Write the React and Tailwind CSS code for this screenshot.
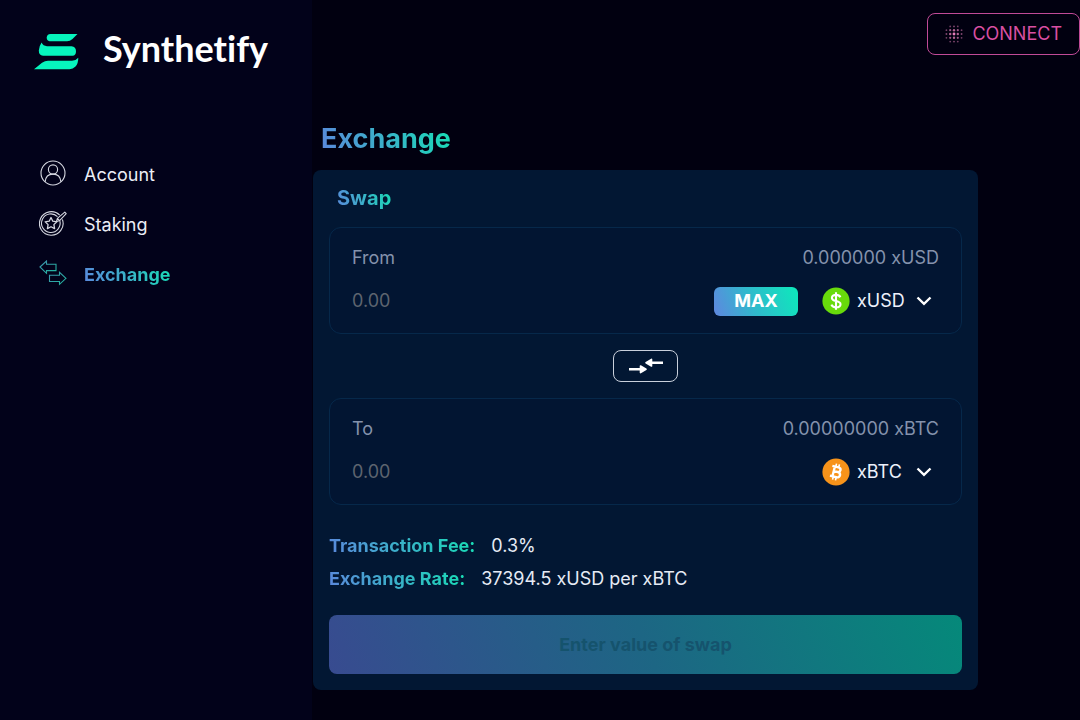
import React from "react";

const gradientText =
  "bg-linear-[68deg,#5c86dd,#16dfb4] bg-clip-text text-transparent";

function Logo() {
  return (
    <a href="#home" className="flex items-end gap-6 px-[34px] text-white">
      <svg viewBox="0 0 45 36" className="h-9 w-[45px] shrink-0" fill="#07f5bd" aria-hidden="true">
        <path d="M16.5 0H43.5L38.5 5Q36 7.2 33 7.2H15.5Q12.7 6.8 12.7 3.8Q12.8 .3 16.5 0Z" />
        <path d="M7.6 8.6Q9 12 13 12.3H37.5Q42 12.7 42 17.3Q42 21.7 38.5 21.8H9Q4.8 21.3 4.8 16.5Q5.2 12 7.6 8.6Z" />
        <path d="M14 26.7H38Q42 26.6 44.3 23.7Q44.3 29.5 41.5 32.6Q39 35.2 35.5 35.2H0L8 28.8Q11 26.7 14 26.7Z" />
      </svg>
      <span className="font-['Lato',sans-serif] text-4xl leading-[44px] font-bold [font-variant-ligatures:none]">Synthetify</span>
    </a>
  );
}

function AccountIcon() {
  return (
    <svg viewBox="0 0 26 26" className="size-[26px]" fill="none" stroke="#d5d7e0" strokeWidth="1.1" aria-hidden="true">
      <circle cx="13" cy="13" r="12" />
      <circle cx="13" cy="9.5" r="4.6" />
      <path d="M5.2 21.8C5.5 17.2 8.2 14.1 13 14.1C17.8 14.1 20.5 17.2 20.8 21.8" />
    </svg>
  );
}

function StakingIcon() {
  return (
    <svg viewBox="0 0 28 26" className="h-[26px] w-7" fill="none" stroke="#d5d7e0" strokeWidth="1.1" strokeLinejoin="round" aria-hidden="true">
      <path d="M20.7 5.2A11.8 11.8 0 1 0 23.4 9.5" />
      <path d="M18.5 6.7A9.3 9.3 0 1 0 20.8 10.7" />
      <path d="M12 7.5L13.8 11.2L17.8 11.8L14.9 14.6L15.6 18.6L12 16.7L8.4 18.6L9.1 14.6L6.2 11.8L10.2 11.2Z" strokeWidth="1.3" />
      <path d="M17.3 11.8L18.4 8.4L25.8 2.2L27.2 3.6L20.6 10.6ZM18.4 8.4L20.6 10.6" />
    </svg>
  );
}

function ExchangeIcon() {
  return (
    <svg viewBox="0 0 28 26" className="h-[26px] w-7" fill="none" stroke="url(#arrows)" strokeWidth="1.1" aria-hidden="true">
      <defs>
        <linearGradient id="arrows" x1="0" y1="0" x2="1" y2="1">
          <stop offset="0" stopColor="#3f93ad" />
          <stop offset="1" stopColor="#1fb79d" />
        </linearGradient>
      </defs>
      <path d="M1 7L7.5 1V4.3H17V10.6H7.5V13.3Z" />
      <path d="M27 18.3L20.5 12.3V15.3H10.5V21.5H20.5V24.3Z" />
    </svg>
  );
}

function NavItem({ icon, label, active }) {
  return (
    <a href={"#" + label.toLowerCase()} className="flex h-[50px] items-center gap-[17px] text-lg text-[#eceef6]" aria-current={active ? "page" : undefined}>
      <span className="flex w-7 justify-center pb-1">{icon}</span>
      <span className={active ? "font-bold " + gradientText : ""}>{label}</span>
    </a>
  );
}

function DotsIcon() {
  const dots = [];
  for (let row = 0; row < 5; row++) {
    for (let col = 0; col < 5; col++) {
      const d = Math.hypot(row - 2, col - 2);
      if (d < 2.8) {
        dots.push(
          <circle key={row + "-" + col} cx={1.5 + col * 4} cy={1.5 + row * 4} r={1.5 - d * 0.25} opacity={1 - d * 0.22} />
        );
      }
    }
  }
  return (
    <svg viewBox="0 0 19 19" className="size-[18px]" fill="#e57dba" aria-hidden="true">
      {dots}
    </svg>
  );
}

function DollarCoin() {
  return (
    <svg viewBox="0 0 28 28" className="size-7" aria-hidden="true">
      <circle cx="14" cy="14" r="13.6" fill="#68db0b" />
      <path d="M18.4 10.2C17.6 8.6 16.1 7.9 14.1 7.9C11.6 7.9 9.9 9 9.9 10.9C9.9 15.2 18.5 12.8 18.5 17.2C18.5 19.2 16.6 20.3 14.2 20.3C11.8 20.3 10.1 19.3 9.4 17.6M14 5.3V22.7" fill="none" stroke="#fff" strokeWidth="2.1" />
    </svg>
  );
}

function BitcoinCoin() {
  return (
    <svg viewBox="0 0 28 28" className="size-7" aria-hidden="true">
      <circle cx="14" cy="14" r="13.6" fill="#f7931a" />
      <g transform="rotate(14 14 14)" fill="none" stroke="#fff" strokeWidth="2.4">
        <path d="M9 8.9H15.2C18.8 8.9 18.8 13.6 15.2 13.6H11.4M15.2 13.6C19.8 13.6 19.8 19 15.5 19H9M11.6 8.9V19" />
        <path d="M12.5 5.8V9M15.5 5.8V9M12.5 19V22.2M15.5 19V22.2" strokeWidth="1.6" />
      </g>
    </svg>
  );
}

function TokenPanel({ id, label, balance, token, coin, max }) {
  return (
    <section className="flex flex-col gap-[14px] rounded-xl border border-[#06284a] bg-[#021532] px-[22px] pt-4 pb-[17px]">
      <div className="flex items-center justify-between text-lg text-[#8492ac]">
        <label htmlFor={id}>{label}</label>
        <span>{balance}</span>
      </div>
      <div className="flex h-[30px] items-center">
        <input id={id} type="text" inputMode="decimal" placeholder="0.00" className="min-w-0 flex-1 bg-transparent text-lg text-white outline-none placeholder:text-[#5d646f]" />
        {max && (
          <button type="button" className="mr-6 h-[29px] w-[84px] rounded-md bg-linear-[68deg,#5f86e0,#30b9cc_45%,#0ceabb] text-lg font-bold text-white">
            MAX
          </button>
        )}
        <div className="relative flex w-[117px] items-center">
          {coin}
          <select aria-label={label + " token"} className="ml-[7px] h-7 flex-1 appearance-none bg-transparent text-lg text-[#edf1fb] outline-none" defaultValue={token}>
            <option>{token}</option>
          </select>
          <svg viewBox="0 0 16 10" className="pointer-events-none absolute right-[7px] h-[10px] w-4" fill="none" stroke="#fff" strokeWidth="2.4" aria-hidden="true">
            <path d="M1.5 1.5L8 7.8L14.5 1.5" />
          </svg>
        </div>
      </div>
    </section>
  );
}

function Detail({ name, value }) {
  return (
    <div className="flex gap-4 text-lg leading-[33px]">
      <dt className={"font-bold " + gradientText}>{name}</dt>
      <dd className="text-[#e6ebf5]">{value}</dd>
    </div>
  );
}

export default function App() {
  return (
    <div className="flex min-h-screen bg-[#010010] font-['Inter',sans-serif]">
      <aside className="w-[312px] shrink-0 bg-[#02021a] pt-[26px]">
        <Logo />
        <nav className="mt-20 px-[39px]">
          <NavItem icon={<AccountIcon />} label="Account" />
          <NavItem icon={<StakingIcon />} label="Staking" />
          <NavItem icon={<ExchangeIcon />} label="Exchange" active />
        </nav>
      </aside>
      <div className="flex min-w-0 flex-1 flex-col">
        <header className="flex justify-end pt-[13px]">
          <button type="button" className="flex h-[42px] items-center gap-[9px] rounded-lg border border-[#c04a97] px-[17px] text-lg text-[#d94fa2]">
            <DotsIcon />
            CONNECT
          </button>
        </header>
        <main className="mt-[66px] mr-[102px] ml-px">
          <h1 className={"ml-2 inline-block text-[27px] leading-9 font-bold " + gradientText}>Exchange</h1>
          <div className="mt-[13px] flex flex-col rounded-lg bg-[#021733] px-4 pt-3 pb-4">
            <h2 className={"mb-[13px] ml-2 self-start text-xl leading-8 font-bold " + gradientText}>Swap</h2>
            <TokenPanel id="from" label="From" balance="0.000000 xUSD" token="xUSD" coin={<DollarCoin />} max />
            <button type="button" aria-label="Switch tokens" className="my-4 flex h-8 w-[65px] items-center justify-center self-center rounded-lg border border-[#c9d0dc]">
              <svg viewBox="0 0 34 16" className="h-4 w-[34px]" fill="#fff" stroke="#fff" strokeWidth="2.4" aria-hidden="true">
                <path d="M0 11.3H12M22 4.7H34" />
                <path d="M11.5 8L17 11.3L11.5 14.6ZM22.5 1.4L17 4.7L22.5 8Z" strokeWidth="1.6" strokeLinejoin="round" />
              </svg>
            </button>
            <TokenPanel id="to" label="To" balance="0.00000000 xBTC" token="xBTC" coin={<BitcoinCoin />} />
            <dl className="mt-6">
              <Detail name="Transaction Fee:" value="0.3%" />
              <Detail name="Exchange Rate:" value="37394.5 xUSD per xBTC" />
            </dl>
            <button type="button" disabled className="mt-5 h-[59px] rounded-lg bg-linear-[68deg,#384b90,#1d6684_50%,#05897a] text-lg font-bold text-[#15536d]">
              Enter value of swap
            </button>
          </div>
        </main>
      </div>
    </div>
  );
}
